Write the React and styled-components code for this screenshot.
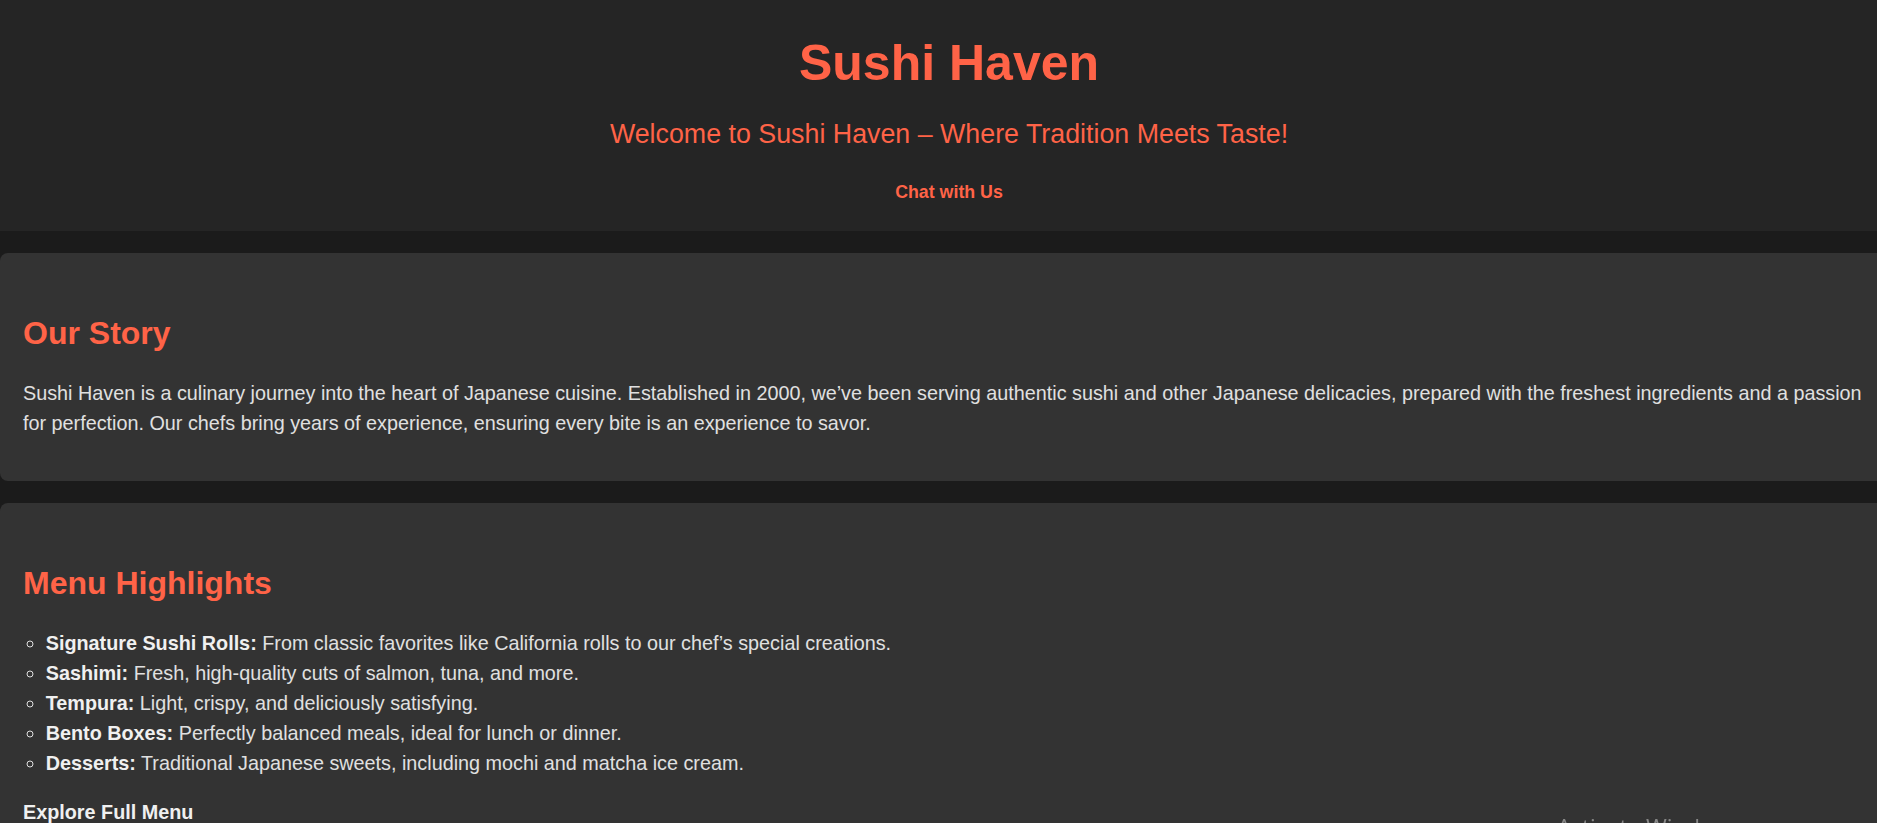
import styled, { createGlobalStyle } from 'styled-components'

const GlobalStyle = createGlobalStyle`
  html, body {
    margin: 0;
    padding: 0;
    background-color: #1b1b1b;
    overflow: hidden;
  }
  body {
    font-family: "Liberation Sans", Arial, sans-serif;
    color: #e0e0e0;
  }
`

const Page = styled.div`
  width: 1898px;
  background-color: #1b1b1b;
`

const Header = styled.header`
  background-color: #252525;
  text-align: center;
  padding: 34px 0 28px;
`

const Title = styled.h1`
  margin: 0 0 27px;
  font-size: 50px;
  font-weight: bold;
  color: #ff6347;
`

const Tagline = styled.p`
  margin: 0 0 32px;
  font-size: 26.8px;
  color: #ff6347;
`

const ChatLink = styled.a`
  display: inline-block;
  font-size: 17.8px;
  font-weight: bold;
  color: #ff6347;
  text-decoration: none;
  cursor: pointer;
`

const Section = styled.section`
  background-color: #333333;
  border-radius: 8px;
  margin: 22px 0;
  padding: 62px 23px 22.5px;
`

const Heading = styled.h2`
  margin: 0 0 26px;
  font-size: 32px;
  font-weight: bold;
  color: #ff6347;
`

const Text = styled.p`
  margin: 0 0 20px;
  font-size: 19.8px;
  line-height: 30px;
`

const List = styled.ul`
  margin: 2.5px 0 19px;
  padding-left: 22.7px;
  list-style: circle;
  font-size: 19.8px;
  line-height: 30px;
`

const Item = styled.li`
  strong {
    color: #f0f0f0;
  }
`

const MenuLink = styled.a`
  display: block;
  font-size: 19.8px;
  line-height: 30px;
  font-weight: bold;
  color: #f0f0f0;
  text-decoration: none;
`

const Watermark = styled.div`
  position: fixed;
  left: 1557px;
  top: 811px;
  font-family: "Open Sans", "Noto Sans", sans-serif;
  font-size: 22.5px;
  color: rgba(255, 255, 255, 0.42);
  white-space: nowrap;
  pointer-events: none;
`

const highlights = [
  ['Signature Sushi Rolls:', "From classic favorites like California rolls to our chef’s special creations."],
  ['Sashimi:', 'Fresh, high-quality cuts of salmon, tuna, and more.'],
  ['Tempura:', 'Light, crispy, and deliciously satisfying.'],
  ['Bento Boxes:', 'Perfectly balanced meals, ideal for lunch or dinner.'],
  ['Desserts:', 'Traditional Japanese sweets, including mochi and matcha ice cream.'],
]

const App = () => {
  return (
    <Page>
      <GlobalStyle />
      <Header>
        <Title>Sushi Haven</Title>
        <Tagline>Welcome to Sushi Haven – Where Tradition Meets Taste!</Tagline>
        <ChatLink>Chat with Us</ChatLink>
      </Header>

      <Section>
        <Heading>Our Story</Heading>
        <Text>
          Sushi Haven is a culinary journey into the heart of Japanese cuisine. Established in 2000, we’ve been
          serving authentic sushi and other Japanese delicacies, prepared with the freshest ingredients and a
          passion for perfection. Our chefs bring years of experience, ensuring every bite is an experience to savor.
        </Text>
      </Section>

      <Section>
        <Heading>Menu Highlights</Heading>
        <List>
          {highlights.map(([label, desc]) => (
            <Item key={label}>
              <strong>{label}</strong> {desc}
            </Item>
          ))}
        </List>
        <MenuLink>Explore Full Menu</MenuLink>
      </Section>

      <Watermark>Activate Windows</Watermark>
    </Page>
  )
}

export default App
